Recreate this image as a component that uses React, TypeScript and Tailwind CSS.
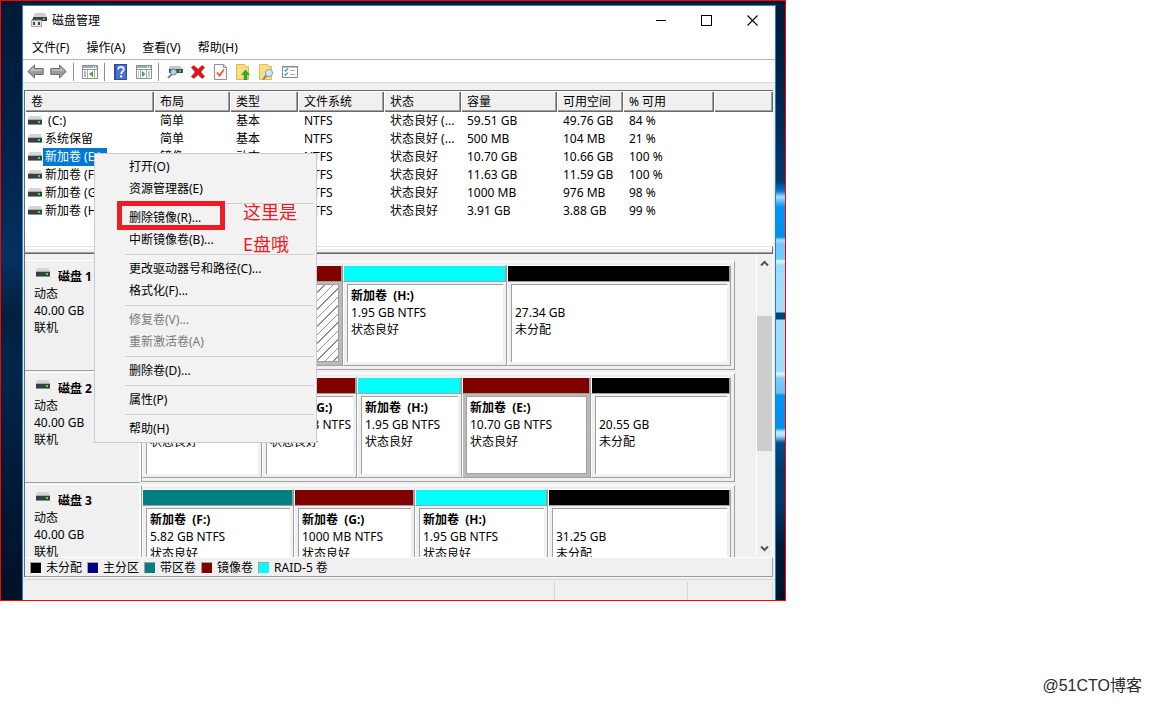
import type { ReactNode } from "react";
import { clsx } from "clsx";

interface IVolume {
  name: string;
  layout: string;
  type: string;
  fs: string;
  status: string;
  capacity: string;
  free: string;
  percent: string;
  selected?: boolean;
}

type Kind = "free" | "striped" | "mirror" | "raid";

interface IPartition {
  title?: string;
  size: string;
  status: string;
  kind: Kind;
  share: number;
  selected?: boolean;
  hatched?: boolean;
}

interface IDisk {
  name: string;
  partitions: IPartition[];
}

const columns = [
  { label: "卷", width: "w-[129px]" },
  { label: "布局", width: "w-[76px]" },
  { label: "类型", width: "w-[68px]" },
  { label: "文件系统", width: "w-[86px]" },
  { label: "状态", width: "w-[77px]" },
  { label: "容量", width: "w-[96px]" },
  { label: "可用空间", width: "w-[66px]" },
  { label: "% 可用", width: "w-[91px]" },
  { label: "", width: "w-auto" },
];

const volumes: IVolume[] = [
  { name: " (C:)", layout: "简单", type: "基本", fs: "NTFS", status: "状态良好 (...", capacity: "59.51 GB", free: "49.76 GB", percent: "84 %" },
  { name: "系统保留", layout: "简单", type: "基本", fs: "NTFS", status: "状态良好 (...", capacity: "500 MB", free: "104 MB", percent: "21 %" },
  { name: "新加卷 (E:)", layout: "镜像", type: "动态", fs: "NTFS", status: "状态良好", capacity: "10.70 GB", free: "10.66 GB", percent: "100 %", selected: true },
  { name: "新加卷 (F:)", layout: "带区", type: "动态", fs: "NTFS", status: "状态良好", capacity: "11.63 GB", free: "11.59 GB", percent: "100 %" },
  { name: "新加卷 (G:)", layout: "镜像", type: "动态", fs: "NTFS", status: "状态良好", capacity: "1000 MB", free: "976 MB", percent: "98 %" },
  { name: "新加卷 (H:)", layout: "RAID-5", type: "动态", fs: "NTFS", status: "状态良好", capacity: "3.91 GB", free: "3.88 GB", percent: "99 %" },
];

const disks: IDisk[] = [
  {
    name: "磁盘 1",
    partitions: [
      { title: "新加卷  (E:)", size: "10.70 GB NTFS", status: "状态良好", kind: "mirror", share: 201, selected: true, hatched: true },
      { title: "新加卷  (H:)", size: "1.95 GB NTFS", status: "状态良好", kind: "raid", share: 164 },
      { size: "27.34 GB", status: "未分配", kind: "free", share: 224 },
    ],
  },
  {
    name: "磁盘 2",
    partitions: [
      { title: "新加卷  (F:)", size: "5.82 GB NTFS", status: "状态良好", kind: "striped", share: 120 },
      { title: "新加卷  (G:)", size: "1000 MB NTFS", status: "状态良好", kind: "mirror", share: 95 },
      { title: "新加卷  (H:)", size: "1.95 GB NTFS", status: "状态良好", kind: "raid", share: 105 },
      { title: "新加卷  (E:)", size: "10.70 GB NTFS", status: "状态良好", kind: "mirror", share: 129, selected: true },
      { size: "20.55 GB", status: "未分配", kind: "free", share: 140 },
    ],
  },
  {
    name: "磁盘 3",
    partitions: [
      { title: "新加卷  (F:)", size: "5.82 GB NTFS", status: "状态良好", kind: "striped", share: 152 },
      { title: "新加卷  (G:)", size: "1000 MB NTFS", status: "状态良好", kind: "mirror", share: 121 },
      { title: "新加卷  (H:)", size: "1.95 GB NTFS", status: "状态良好", kind: "raid", share: 133 },
      { size: "31.25 GB", status: "未分配", kind: "free", share: 183 },
    ],
  },
];

const menuGroups = [
  [{ label: "打开(O)" }, { label: "资源管理器(E)" }],
  [{ label: "删除镜像(R)..." }, { label: "中断镜像卷(B)..." }],
  [{ label: "更改驱动器号和路径(C)..." }, { label: "格式化(F)..." }],
  [
    { label: "修复卷(V)...", disabled: true },
    { label: "重新激活卷(A)", disabled: true },
  ],
  [{ label: "删除卷(D)..." }],
  [{ label: "属性(P)" }],
  [{ label: "帮助(H)" }],
];

const kindColor: Record<Kind, string> = {
  free: "bg-black",
  striped: "bg-[#008080]",
  mirror: "bg-[#800000]",
  raid: "bg-[#00ffff]",
};

const legend = [
  { label: "未分配", color: "bg-black" },
  { label: "主分区", color: "bg-[#000080]" },
  { label: "带区卷", color: "bg-[#008080]" },
  { label: "镜像卷", color: "bg-[#800000]" },
  { label: "RAID-5 卷", color: "bg-[#00ffff]" },
];

function DriveIcon() {
  return (
    <svg width="14" height="10" viewBox="0 0 14 10" className="shrink-0" aria-hidden="true">
      <path d="M1 0h12L14 4H0z" fill="#d3d6d9" />
      <rect x="0" y="4" width="14" height="4" fill="#3c3f42" />
      <rect x="0" y="3" width="14" height="1" fill="#a9acaf" />
      <rect x="0" y="8" width="14" height="1" fill="#8b8e90" />
      <rect x="10" y="5" width="2" height="2" fill="#2bf03a" />
    </svg>
  );
}

function AppIcon() {
  return (
    <svg width="16" height="16" viewBox="0 0 16 16" aria-hidden="true">
      <path d="M4 1h10l2 4H2z" fill="#cfd2d5" />
      <rect x="2" y="5" width="14" height="4" fill="#3a3d40" />
      <rect x="12" y="6" width="2" height="2" fill="#2be03a" />
      <rect x="1" y="7" width="9" height="2" fill="#555" />
      <rect x="0" y="8" width="11" height="7" fill="#a9acae" />
      <rect x="1" y="9" width="9" height="5" fill="#e6e6e6" />
      <rect x="2" y="10" width="2" height="3" fill="#444" />
      <rect x="7" y="10" width="2" height="3" fill="#444" />
    </svg>
  );
}

function ArrowIcon({ right }: { right?: boolean }) {
  return (
    <svg width="17" height="15" viewBox="0 0 17 15" className={clsx(right && "-scale-x-100")} aria-hidden="true">
      <path d="M0.8 7.5L7.5 1v3.5h8.7v6H7.5V14z" fill="#9b9b9b" stroke="#707070" />
      <path d="M2.6 7.2L6.6 3.3v2.2h8.5v1.3z" fill="#c2c2c2" />
    </svg>
  );
}

function PaneIcon({ right }: { right?: boolean }) {
  return (
    <svg width="16" height="14" viewBox="0 0 16 14" aria-hidden="true">
      <rect x="0.5" y="0.5" width="15" height="13" fill="#fff" stroke="#8b9199" />
      <rect x="1" y="1" width="14" height="2" fill="#a6abb3" />
      <path d="M11 2h1M13 2h1" stroke="#fff" />
      <path d="M1 4.5h14" stroke="#8b9199" />
      {right ? (
        <>
          <path d="M4.5 5v8M10.5 5v8" stroke="#a6abb3" />
          <path d="M12 7h2M12 9h2M12 11h2M2 7h1M2 9h1M2 11h1" stroke="#8b9199" />
          <path d="M6 6l3.5 3L6 12z" fill="#35b020" />
        </>
      ) : (
        <>
          <path d="M5.5 5v8M12.5 5v8" stroke="#a6abb3" />
          <path d="M2 7h2M2 9h2M2 11h2" stroke="#5577a0" />
          <path d="M11 6L7 9l4 3z" fill="#35b020" />
        </>
      )}
    </svg>
  );
}

function HelpIcon() {
  return (
    <svg width="13" height="16" viewBox="0 0 13 16" aria-hidden="true">
      <rect width="13" height="16" fill="#2a4bab" />
      <rect x="2" y="1" width="10" height="14" fill="#4a70d0" />
      <path d="M4.3 5.6C4.3 3.5 5.5 2.8 7 2.8s2.8 0.9 2.8 2.5C9.8 7.4 7.2 7.4 7.2 10" fill="none" stroke="#fff" strokeWidth="1.7" />
      <rect x="6" y="11.4" width="2.2" height="2" fill="#fff" />
    </svg>
  );
}

function RescanIcon() {
  return (
    <svg width="16" height="14" viewBox="0 0 16 14" aria-hidden="true">
      <path d="M3 1h11l1 3H2z" fill="#c4c8cc" />
      <rect x="2" y="4" width="14" height="4" fill="#484b4e" />
      <rect x="12" y="5" width="2" height="2" fill="#2be03a" />
      <path d="M4.5 9.5L1 13" stroke="#6a86a6" strokeWidth="2" />
      <circle cx="6.5" cy="7" r="3" fill="#bcd3e8" stroke="#5f7e9e" />
    </svg>
  );
}

function DeleteIcon() {
  return (
    <svg width="14" height="14" viewBox="0 0 14 14" aria-hidden="true">
      <path d="M0.5 2.5L3 0.5l4 4 4-4 2.5 2L9.7 7l3.8 4.5-2.5 2-4-4-4 4-2.5-2L4.3 7z" fill="#e0131a" stroke="#a80008" strokeWidth="0.6" />
    </svg>
  );
}

function CheckPageIcon() {
  return (
    <svg width="13" height="16" viewBox="0 0 13 16" aria-hidden="true">
      <path d="M0.5 0.5h9l3 3v12h-12z" fill="#fafafa" stroke="#8f8f8f" />
      <path d="M9.5 0.5v3h3" fill="none" stroke="#8f8f8f" />
      <path d="M3 8.5l2.5 3 4.5-6" fill="none" stroke="#f05a28" strokeWidth="1.8" />
    </svg>
  );
}

function FolderIcon({ children }: { children: ReactNode }) {
  return (
    <svg width="15" height="16" viewBox="0 0 15 16" aria-hidden="true">
      <path d="M0.5 0.5h8l1 2h3v13h-12z" fill="#fbdf7f" stroke="#e3bb4c" />
      {children}
    </svg>
  );
}

function ListIcon() {
  return (
    <svg width="16" height="12" viewBox="0 0 16 12" aria-hidden="true">
      <rect x="0.5" y="0.5" width="15" height="11" fill="#fff" stroke="#8a8a8a" />
      <path d="M1 1h14" stroke="#8a8a8a" />
      <path d="M2.5 4l1 1.2L6 2.5M2.5 8l1 1.2L6 6.7" fill="none" stroke="#3c8fdc" strokeWidth="1.2" />
      <path d="M8 4.5h5M8 8.5h5" stroke="#a0b0c4" />
    </svg>
  );
}

function ToolButton({ label, children }: { label: string; children: ReactNode }) {
  return (
    <button type="button" aria-label={label} className="flex h-[22px] w-[23px] items-center justify-center">
      {children}
    </button>
  );
}

function ToolSeparator() {
  return <span className="mr-1 ml-[3px] h-[18px] w-px bg-[#8d8d8d]" />;
}

function TitleBar() {
  return (
    <header className="flex h-7 items-center pl-2">
      <AppIcon />
      <h1 className="ml-[5px] flex-1 pt-[2px]">磁盘管理</h1>
      <button type="button" aria-label="最小化" className="flex h-7 w-[46px] items-center justify-center">
        <span className="h-px w-[10px] bg-black" />
      </button>
      <button type="button" aria-label="最大化" className="flex h-7 w-[45px] items-center justify-center">
        <span className="size-[11px] border border-black" />
      </button>
      <button type="button" aria-label="关闭" className="flex h-7 w-[46px] items-center justify-center">
        <svg width="11" height="11" viewBox="0 0 11 11" aria-hidden="true">
          <path d="M0.5 0.5l10 10M10.5 0.5l-10 10" stroke="#000" strokeWidth="1.1" />
        </svg>
      </button>
    </header>
  );
}

function Toolbar() {
  return (
    <div role="toolbar" className="flex h-[23px] items-center border-b border-[#d9d9d9] pt-px pl-px">
      <ToolButton label="后退"><ArrowIcon /></ToolButton>
      <ToolButton label="前进"><ArrowIcon right /></ToolButton>
      <ToolSeparator />
      <ToolButton label="控制台树"><PaneIcon /></ToolButton>
      <ToolSeparator />
      <ToolButton label="帮助"><HelpIcon /></ToolButton>
      <ToolButton label="操作窗格"><PaneIcon right /></ToolButton>
      <ToolSeparator />
      <ToolButton label="重新扫描"><RescanIcon /></ToolButton>
      <ToolButton label="删除"><DeleteIcon /></ToolButton>
      <ToolButton label="属性"><CheckPageIcon /></ToolButton>
      <ToolButton label="打开">
        <FolderIcon>
          <path d="M9.5 6l4 4.5H11V16H8v-5.5H5.5z" fill="#2fae2b" stroke="#1f8d1c" strokeWidth="0.5" />
        </FolderIcon>
      </ToolButton>
      <ToolButton label="浏览">
        <FolderIcon>
          <path d="M7.5 11.5L4 15.2" stroke="#7c8894" strokeWidth="2" />
          <circle cx="10" cy="9" r="3.6" fill="#cfe6f6" stroke="#7fa0bd" />
        </FolderIcon>
      </ToolButton>
      <ToolButton label="列表"><ListIcon /></ToolButton>
    </div>
  );
}

function VolumeTable() {
  return (
    <div className="border-t border-[#696969] bg-white pb-[26px]">
      <table className="w-full table-fixed border-collapse text-left">
        <thead>
          <tr className="h-[21px]">
            {columns.map((col, i) => (
              <th
                key={i}
                className={clsx(
                  "h-[21px] bg-[#f0f0f0] p-0 pl-[6px] font-normal shadow-[inset_1px_1px_#fff,inset_-1px_-1px_#696969,inset_-2px_-2px_#a0a0a0]",
                  col.width,
                )}
              >
                {col.label}
              </th>
            ))}
          </tr>
        </thead>
        <tbody>
          {volumes.map((v) => (
            <tr key={v.name} className="h-[18px] whitespace-nowrap">
              <td className="p-0">
                <div className="flex items-center pl-[3px]">
                  <DriveIcon />
                  <span className={clsx("ml-px h-[18px] whitespace-pre px-[2px]", v.selected && "bg-[#0078d7] pr-[6px] text-white")}>
                    {v.name}
                  </span>
                </div>
              </td>
              {[v.layout, v.type, v.fs, v.status, v.capacity, v.free, v.percent].map((text, i) => (
                <td key={i} className="p-0 pl-[6px]">
                  {text}
                </td>
              ))}
              <td className="p-0" />
            </tr>
          ))}
        </tbody>
      </table>
    </div>
  );
}

function Partition({ part }: { part: IPartition }) {
  return (
    <div className="min-w-0" style={{ flex: `${part.share} 1 0%` }}>
      <div className="h-[17px] border-t border-r-2 border-b border-l border-t-white border-r-[#a0a0a0] border-b-[#a0a0a0] border-l-white">
        <div className={clsx("h-full", kindColor[part.kind])} />
      </div>
      <div
        className={clsx(
          "h-[84px] border-r border-b border-l border-r-[#a0a0a0] border-b-[#a0a0a0] border-l-white px-[3px] pt-[2px] pb-[3px]",
          part.selected ? "bg-[#bababa]" : "bg-[#f0f0f0]",
        )}
      >
        <div
          className={clsx(
            "h-full overflow-hidden border-t border-l border-[#a0a0a0] px-[3px] pt-[2px] leading-[17px] whitespace-pre",
            part.selected && "border-r border-b",
            part.hatched
              ? "bg-[repeating-linear-gradient(135deg,#ffffff_0px,#ffffff_5px,#909090_5px,#909090_6px)]"
              : "bg-white",
          )}
        >
          <p className="h-[17px] font-bold">{part.title}</p>
          <p>{part.size}</p>
          <p>{part.status}</p>
        </div>
      </div>
    </div>
  );
}

function DiskRow({ disk }: { disk: IDisk }) {
  return (
    <section className="flex h-28">
      <div className="mb-px w-[116px] shrink-0 border-t border-r-2 border-b border-t-white border-r-white border-b-[#a0a0a0] pt-[7px] pl-[9px] leading-[17px]">
        <div className="flex h-[17px] items-start pl-[2px]">
          <DriveIcon />
          <h2 className="ml-2 font-bold">{disk.name}</h2>
        </div>
        <p>动态</p>
        <p>40.00 GB</p>
        <p>联机</p>
      </div>
      <div className="mt-px mr-[21px] mb-[2px] flex min-w-0 flex-1 border border-t-white border-r-[#a0a0a0] border-b-[#a0a0a0] border-l-[#a0a0a0] pt-[3px] pr-[3px]">
        {disk.partitions.map((p, i) => (
          <Partition key={i} part={p} />
        ))}
      </div>
    </section>
  );
}

function Chevron({ down }: { down?: boolean }) {
  return (
    <svg width="9" height="7" viewBox="0 0 9 7" className={clsx(down && "rotate-180")} aria-hidden="true">
      <path d="M1 5.5l3.5-3.5L8 5.5" fill="none" stroke="#555" strokeWidth="2" />
    </svg>
  );
}

function DiskPane() {
  return (
    <div className="flex h-[303px] overflow-hidden">
      <div className="min-w-0 flex-1 pt-[6px]">
        {disks.map((d) => (
          <DiskRow key={d.name} disk={d} />
        ))}
      </div>
      <div className="flex w-[17px] flex-col border-x border-white bg-[#f0f0f0]">
        <button type="button" aria-label="向上滚动" className="flex h-[18px] items-center justify-center">
          <Chevron />
        </button>
        <div className="flex-1 pt-11">
          <div className="h-[135px] bg-[#cdcdcd]" />
        </div>
        <button type="button" aria-label="向下滚动" className="flex h-[18px] items-center justify-center">
          <Chevron down />
        </button>
      </div>
    </div>
  );
}

function ContextMenu() {
  return (
    <div role="menu" className="absolute top-[152px] left-[93px] w-[223px] border border-[#cccccc] bg-[#f2f2f2] py-[2px]">
      {menuGroups.map((group, i) => (
        <div key={i}>
          {i > 0 && (
            <div role="separator" className="mr-[2px] ml-[30px] flex h-[7px] items-center">
              <span className="h-px w-full bg-[#d0d0d0]" />
            </div>
          )}
          {group.map((item) => (
            <button
              key={item.label}
              type="button"
              role="menuitem"
              disabled={"disabled" in item}
              className="block h-[22px] w-full pl-[34px] text-left leading-[22px] disabled:text-[#7a7a7a]"
            >
              {item.label}
            </button>
          ))}
        </div>
      ))}
      <div className="pointer-events-none absolute top-[47px] left-[22px] h-[29px] w-[108px] border-[5px] border-[#ed1c24]" />
      <p className="pointer-events-none absolute top-[42px] left-[148px] text-lg leading-8 whitespace-pre text-[#ed1c24]">
        这里是{"\n"}E盘哦
      </p>
    </div>
  );
}

export default function App() {
  return (
    <div className="flex min-h-screen flex-col bg-white font-['Noto_Sans','Noto_Sans_CJK_SC',sans-serif] text-xs leading-[18px] text-black">
      <main className="relative flex w-full max-w-[786px] border border-[#ff0000] bg-[#001c38]">
        <div className="w-[21px] shrink-0 bg-[linear-gradient(#001a36,#00234a_25%,#043261_43%,#02203f_52%,#02264b_62%,#001a38_80%,#001126)]" />
        <div className="mt-1 min-w-0 flex-1 border-x border-t border-[#1883d7] bg-white">
          <TitleBar />
          <nav className="flex h-[26px] items-center gap-px border-b border-[#b4b4b4] pt-[2px] pl-px">
            {["文件(F)", "操作(A)", "查看(V)", "帮助(H)"].map((m) => (
              <button key={m} type="button" className="px-2">
                {m}
              </button>
            ))}
          </nav>
          <Toolbar />
          <div className="bg-[#f0f0f0] pt-[7px]">
            <div className="mr-[2px] ml-px border-l border-[#696969]">
              <VolumeTable />
              <div className="h-2 border-t border-r border-b border-t-[#e3e3e3] border-r-[#696969] border-b-[#696969] shadow-[inset_0_2px_#ffffff,inset_0_-1px_#a0a0a0]" />
              <DiskPane />
              <ul className="flex h-5 items-center gap-[5px] border-t border-r border-b border-t-white border-r-[#a0a0a0] border-b-[#a0a0a0] pt-px pl-[5px]">
                {legend.map((l) => (
                  <li key={l.label} className="flex items-center gap-1">
                    <span className={clsx("size-3 border border-t-[#a0a0a0] border-r-white border-b-white border-l-[#a0a0a0]", l.color)} />
                    {l.label}
                  </li>
                ))}
              </ul>
            </div>
            <footer className="mt-[2px] flex h-[21px] border-t border-[#d7d7d7] pt-[2px] pr-[2px]">
              <span className="flex-1 border-r border-[#d7d7d7]" />
              <span className="w-[133px] border-r border-[#d7d7d7]" />
              <span className="w-[85px] border-r border-[#d7d7d7]" />
            </footer>
          </div>
        </div>
        <div className="w-[9px] shrink-0 bg-[linear-gradient(#001a36_0px,#002a55_120px,#003a70_180px,#0078d0_190px,#a8e0ff_196px,#58c0ff_200px,#0095f5_206px,#0091f0_236px,#a5dfff_239px,#74caff_243px,#6fcaff_258px,#e0f8ff_260px,#9ddcff_264px,#a5dcfa_311px,#00447a_312px,#00447a_318px,#a5dcfa_319px,#a0dcff_370px,#e0f8ff_373px,#7ccbfa_377px,#6cc0f5_392px,#0095f8_394px,#0090f0_427px,#c8f0ff_431px,#a0dcff_435px,#004a88_442px,#00386b_470px,#003a70_500px,#001a38_545px,#001229_600px)]" />
        <ContextMenu />
      </main>
      <p className="mt-auto self-end pr-[10px] pb-2 font-['Liberation_Sans','Noto_Sans_CJK_SC',sans-serif] text-base leading-5 text-[#2a2a2a]">
        @51CTO博客
      </p>
    </div>
  );
}
